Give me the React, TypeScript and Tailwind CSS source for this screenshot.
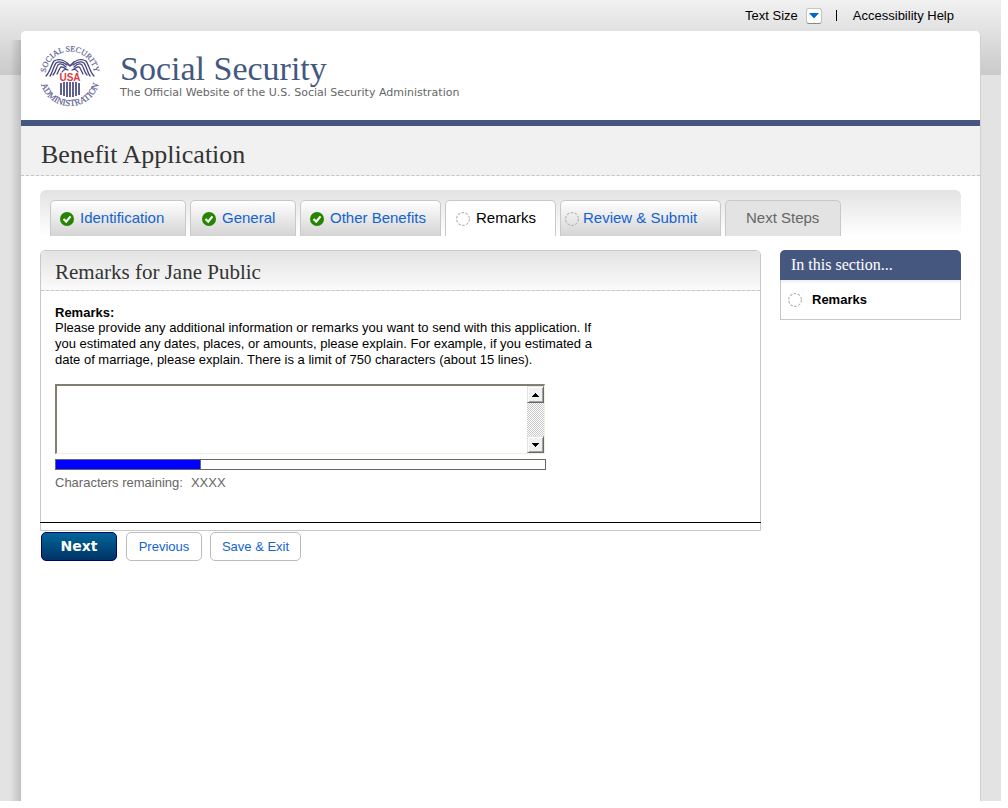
import { useState, ReactNode } from "react"
import clsx from "clsx"

type Status = 'done' | 'open' | 'none'

interface Tab {
      label: string
      status: Status
      className: string
}

const tabs: Tab[] = [
      { label: 'Identification', status: 'done', className: 'w-[136px] pl-[9px]' },
      { label: 'General', status: 'done', className: 'w-[106px] pl-[11px]' },
      { label: 'Other Benefits', status: 'done', className: 'w-[141px] pl-[9px]' },
      { label: 'Remarks', status: 'open', className: 'w-[111px] pl-[10px]' },
      { label: 'Review & Submit', status: 'open', className: 'w-[161px] pl-1' },
      { label: 'Next Steps', status: 'none', className: 'w-[116px] pl-5' },
]

function Seal() {
      return (
            <svg width="70" height="70" viewBox="-4 -4 70 70" role="img" aria-label="Social Security Administration seal" className="shrink-0">
                  <defs>
                        <path id="seal-top" d="M6.5 31 A24.5 24.5 0 1 1 55.5 31" />
                        <path id="seal-bottom" d="M1 31 A30 30 0 0 0 61 31" />
                  </defs>
                  <g fill="#5f5f90" stroke="#5f5f90" strokeWidth="0.2" fontFamily="'Liberation Serif', serif">
                        <text fontSize="8">
                              <textPath href="#seal-top" startOffset="50%" textAnchor="middle">SOCIAL SECURITY</textPath>
                        </text>
                        <text fontSize="9">
                              <textPath href="#seal-bottom" startOffset="50%" textAnchor="middle">ADMINISTRATION</textPath>
                        </text>
                  </g>
                  {/* eagle */}
                  <g fill="none" stroke="#46457f" strokeWidth="1.3" strokeLinecap="round">
                        <path d="M30 20 C26 15 20 13 15 16 C12 20 11 27 7 31" />
                        <path d="M28 20 C24 17 20 16 17 18 C14 22 14 27 11 31" />
                        <path d="M27 22 C24 19 21 18 19 20 C17 23 17 27 14 30" />
                        <path d="M27 24 C24 22 22 21 21 23 C20 25 19 27 18 29" />
                        <path d="M29 25 C27 24 25 24 23 27" />
                        <path d="M32 20 C36 15 42 13 47 16 C50 20 51 27 55 31" />
                        <path d="M34 20 C38 17 42 16 45 18 C48 22 48 27 51 31" />
                        <path d="M35 22 C38 19 41 18 43 20 C45 23 45 27 48 30" />
                        <path d="M35 24 C38 22 40 21 41 23 C42 25 43 27 44 29" />
                        <path d="M33 25 C35 24 37 24 39 27" />
                        <path d="M28 18 L31 21 L35 17" />
                  </g>
                  <text x="31" y="36" textAnchor="middle" fill="#dd3a40" fontSize="10" fontWeight="bold" fontFamily="'Liberation Sans', sans-serif">USA</text>
                  <path d="M22 38v12M25 37v14M28 37v15M31 37v15M34 37v15M37 37v14M40 38v12" stroke="#46457f" strokeWidth="1.7" />
            </svg>
      )
}

function StatusIcon({ status }: { status: Status }) {
      if (status === 'none') return null
      return (
            <svg width="14" height="14" viewBox="0 0 14 14" aria-hidden="true" className="shrink-0">
                  {status === 'done' ? (
                        <>
                              <circle cx="7" cy="7" r="7" fill="#238500" />
                              <path d="M3.5 7 L6.2 9.6 L10.5 4.4" fill="none" stroke="#fff" strokeWidth="2.2" />
                        </>
                  ) : (
                        <circle cx="7" cy="7" r="6.4" fill="none" stroke="#b4b4b4" strokeWidth="1.1" strokeDasharray="2.6 1.4" />
                  )}
            </svg>
      )
}

function ScrollButton({ label, children }: { label: string, children: ReactNode }) {
      return (
            <button
                  type="button"
                  aria-label={label}
                  className="flex h-[17px] w-[17px] items-center justify-center border border-t-[#e3e3e3] border-l-[#e3e3e3] border-r-[#696969] border-b-[#696969] bg-[#f0f0f0] shadow-[inset_1px_1px_0_#fff,inset_-1px_-1px_0_#a0a0a0]"
            >
                  {children}
            </button>
      )
}

function TopBar() {
      return (
            <div className="flex h-[31px] items-center justify-end pr-[47px] text-[13px] text-black">
                  <span id="text-size">Text Size</span>
                  <button type="button" aria-labelledby="text-size" className="ml-2 flex h-4 w-4 items-center justify-center rounded-[3px] border border-[#c4c4c4] border-b-[#888] bg-white">
                        <svg width="10" height="6" viewBox="0 0 10 6" aria-hidden="true"><path d="M0 0h10L5 5.5z" fill="#0066d4" /></svg>
                  </button>
                  <span className="mr-4 ml-[14px] h-[11px] w-px bg-black" />
                  <a href="#help">Accessibility Help</a>
            </div>
      )
}

function Header() {
      return (
            <header className="rounded-t-[5px] border-b-[6px] border-[#46577f] bg-white">
                  <div className="flex h-[89px] items-center pl-[14px]">
                        <Seal />
                        <div className="ml-[15px] pt-px">
                              <div className="font-['Georgia','Liberation_Serif',serif] text-[34px] leading-[34px] text-[#43587f]">Social Security</div>
                              <div className="font-['DejaVu_Sans',sans-serif] text-[11px] leading-[14px] text-[#666]">The Official Website of the U.S. Social Security Administration</div>
                        </div>
                  </div>
            </header>
      )
}

function TabBar() {
      return (
            <nav aria-label="Application steps" className="flex gap-1 rounded-t-[6px] bg-linear-to-b from-[#e3e3e3] to-white pt-[10px] pl-[10px]">
                  {tabs.map(tab => {
                        const isActive = tab.label === 'Remarks'
                        const isDisabled = tab.status === 'none'
                        return (
                              <a
                                    key={tab.label}
                                    href="#step"
                                    aria-current={isActive ? 'step' : undefined}
                                    aria-disabled={isDisabled}
                                    className={clsx(
                                          'flex h-9 items-center rounded-t-[5px] border border-b-0 border-[#c8c8c8] text-[15px] whitespace-nowrap',
                                          tab.label === 'Review & Submit' ? 'gap-1' : 'gap-[6px]',
                                          isActive && 'bg-white text-black',
                                          isDisabled && 'bg-[#e3e3e3] text-[#666]',
                                          !isActive && !isDisabled && 'bg-linear-to-b from-white to-[#d4d4d4] text-[#1463cf]',
                                          tab.className
                                    )}
                              >
                                    <StatusIcon status={tab.status} />
                                    {tab.label}
                              </a>
                        )
                  })}
            </nav>
      )
}

function RemarksForm() {
      const [remarks, setRemarks] = useState<string>('')
      const used = 145 + remarks.length

      return (
            <form className="min-w-0 flex-1" onSubmit={ev => ev.preventDefault()}>
                  <section className="rounded-t-[5px] border border-[#c8c8c8] pb-[7px]">
                        <h2 className="h-10 rounded-t-[5px] border-b border-dashed border-[#c8c8c8] bg-linear-to-b from-[#e3e3e3] to-[#fbfbfb] pl-[14px] font-['Georgia','Liberation_Serif',serif] text-[21px] leading-[43px] text-[#333]">
                              Remarks for Jane Public
                        </h2>
                        <div className="border-b border-black -mx-px px-[15px] pt-[14px] pb-[31px]">
                              <label htmlFor="remarks" className="block text-[13px] leading-[15px] font-bold">Remarks:</label>
                              <p className="max-w-[550px] text-[13px] leading-4">
                                    Please provide any additional information or remarks you want to send with this application. If
                                    <br />
                                    you estimated any dates, places, or amounts, please explain. For example, if you estimated a
                                    <br />
                                    date of marriage, please explain. There is a limit of 750 characters (about 15 lines).
                              </p>
                              <div className="mt-4 flex h-[70px] max-w-[490px] border-t-2 border-r border-b border-l-2 border-t-[#827f71] border-l-[#827f71] border-r-[#f1efe2] border-b-[#f1efe2]">
                                    <textarea
                                          id="remarks"
                                          value={remarks}
                                          maxLength={750}
                                          onChange={ev => setRemarks(ev.target.value)}
                                          className="min-w-0 flex-1 resize-none overflow-hidden bg-white text-[13px] outline-none"
                                    />
                                    <div className="flex flex-col justify-between bg-[repeating-conic-gradient(#c8c8c8_0_25%,#fff_0_50%)] bg-[length:2px_2px]">
                                          <ScrollButton label="Scroll up">
                                                <svg width="7" height="4" viewBox="0 0 7 4" shapeRendering="crispEdges" aria-hidden="true"><path d="M3 0h1v1h1v1h1v1h1v1H0V3h1V2h1V1h1z" /></svg>
                                          </ScrollButton>
                                          <ScrollButton label="Scroll down">
                                                <svg width="7" height="4" viewBox="0 0 7 4" shapeRendering="crispEdges" aria-hidden="true"><path d="M0 0h7v1H6v1H5v1H4v1H3V3H2V2H1V1H0z" /></svg>
                                          </ScrollButton>
                                    </div>
                              </div>
                              <div role="progressbar" aria-label="Characters used" aria-valuenow={used} aria-valuemin={0} aria-valuemax={489} className="mt-[5px] h-[11px] max-w-[491px] border border-[#666] bg-white">
                                    <div className="h-full border-r border-[#666] bg-[#0000ff]" style={{ width: `${Math.min(used / 489, 1) * 100}%` }} />
                              </div>
                              <div className="mt-[5px] flex gap-2 text-[13px] leading-4 text-[#666]">
                                    <span>Characters remaining:</span>
                                    <span>XXXX</span>
                              </div>
                        </div>
                  </section>
                  <div className="mt-px flex gap-2 pl-px">
                        <button type="submit" className="mr-px h-[29px] w-[76px] rounded-[5px] border border-[#000066] bg-linear-to-b from-[#006699] to-[#003366] font-['DejaVu_Sans',sans-serif] text-[14px] font-bold text-white">Next</button>
                        <button type="button" className="h-[29px] w-[76px] rounded-[5px] border border-[#bbb] bg-white text-[13px] text-[#1463cf]">Previous</button>
                        <button type="button" className="h-[29px] w-[91px] rounded-[5px] border border-[#bbb] bg-white text-[13px] text-[#1463cf]">Save &amp; Exit</button>
                  </div>
            </form>
      )
}

function SectionNav() {
      return (
            <aside className="w-[181px] shrink-0">
                  <h2 className="h-[30px] rounded-t-[5px] bg-[#46577f] pl-[11px] font-['Georgia','Liberation_Serif',serif] text-[16px] leading-[30px] text-white">In this section...</h2>
                  <div className="flex h-10 items-center gap-[10px] border border-t-0 border-[#c8c8c8] bg-linear-to-b from-[#eee] to-white to-10% pl-[7px] text-[13px] font-bold text-black">
                        <StatusIcon status="open" />
                        Remarks
                  </div>
            </aside>
      )
}

export default function App() {
      return (
            <div className="flex min-h-screen bg-white pr-[7px] pb-[7px] font-['Liberation_Sans',Arial,sans-serif] text-black">
                  <div className="flex min-w-0 flex-1 flex-col bg-[#e3e3e3] bg-[linear-gradient(#f1f1f1,#cacaca)] bg-[length:100%_75px] bg-no-repeat">
                        <TopBar />
                        <div className="flex flex-1 pr-[20px] pl-[10px]">
                              {/* soft shadow down the left edge of the page */}
                              <div className="mt-[9px] w-[11px] shrink-0 bg-linear-to-r from-black/0 to-black/15" />
                              <div className="flex min-w-0 flex-1 flex-col rounded-t-[5px] border-r border-[#d0d0d0] bg-white">
                                    <Header />
                                    <h1 className="h-[50px] border-b border-dashed border-[#c4c4c4] bg-[#f1f1f1] pl-5 font-['Georgia','Liberation_Serif',serif] text-[26px] leading-[57px] text-[#333]">Benefit Application</h1>
                                    <main className="px-[19px] pt-[14px]">
                                          <TabBar />
                                          <div className="mt-[14px] flex items-start gap-[19px]">
                                                <RemarksForm />
                                                <SectionNav />
                                          </div>
                                    </main>
                              </div>
                        </div>
                  </div>
            </div>
      )
}
